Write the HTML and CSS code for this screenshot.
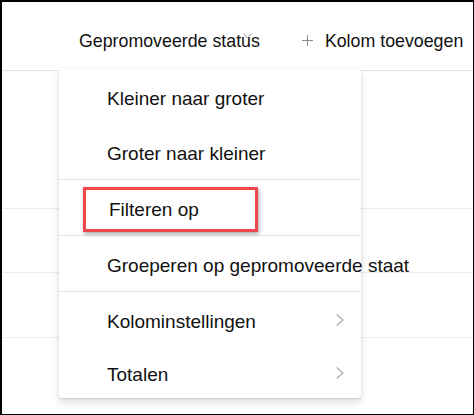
FILE: index.html
```html
<!DOCTYPE html>
<html lang="nl">
<head>
<meta charset="utf-8">
<title>Kolommenu</title>
<link rel="stylesheet" href="styles.css">
</head>
<body>
<div class="frame">
  <div class="header">
    <div class="col col-status">
      <span>Gepromoveerde status</span>
      <svg class="sort-chevron" width="9" height="6" viewBox="0 0 9 6"><polyline points="0.5,0.5 4.5,5 8.5,0.5" fill="none" stroke="#9a9a9a" stroke-width="1"/></svg>
    </div>
    <div class="col col-add">
      <svg class="plus" width="11" height="11" viewBox="0 0 11 11"><path d="M5.5 0v11M0 5.5h11" stroke="#8c8c8c" stroke-width="1" fill="none"/></svg>
      <span>Kolom toevoegen</span>
    </div>
  </div>
  <div class="row row-tall"></div>
  <div class="row"></div>
  <div class="row"></div>

  <div class="menu">
    <div class="section">
      <div class="item"><span class="label">Kleiner naar groter</span></div>
      <div class="item"><span class="label">Groter naar kleiner</span></div>
    </div>
    <div class="section">
      <div class="item item-highlight"><span class="label">Filteren op</span><span class="callout"></span></div>
    </div>
    <div class="section">
      <div class="item"><span class="label">Groeperen op gepromoveerde staat</span></div>
    </div>
    <div class="section">
      <div class="item"><span class="label">Kolominstellingen</span>
        <svg class="chev" width="8" height="12" viewBox="0 0 8 12"><polyline points="0.7,0.5 7,6 0.7,11.5" fill="none" stroke="#a6a6a6" stroke-width="1.1"/></svg>
      </div>
      <div class="item"><span class="label">Totalen</span>
        <svg class="chev" width="8" height="12" viewBox="0 0 8 12"><polyline points="0.7,0.5 7,6 0.7,11.5" fill="none" stroke="#a6a6a6" stroke-width="1.1"/></svg>
      </div>
    </div>
  </div>
</div>
</body>
</html>
```

FILE: styles.css
```css
* { box-sizing: border-box; }

html, body {
  margin: 0;
  padding: 0;
  background: #fff;
}

body {
  font-family: "Liberation Sans", Arial, sans-serif;
  color: #111;
}

.frame {
  position: relative;
  width: 474px;
  height: 415px;
  border: 2px solid #000;
  border-right-width: 1px;
  border-bottom-width: 1px;
  overflow: hidden;
  background: #fff;
}

.header {
  display: flex;
  align-items: flex-start;
  height: 69px;
  padding: 29px 0 0 77px;
  border-bottom: 1px solid #e3e3e3;
  font-size: 17.8px;
  line-height: 20px;
  white-space: nowrap;
}

.col-status {
  position: relative;
}

.sort-chevron {
  position: absolute;
  left: 164px;
  top: 2px;
}

.col-add {
  display: flex;
  align-items: center;
  gap: 12px;
  margin-left: 42px;
}

.plus {
  margin-top: -2px;
}

.row {
  height: 65px;
  border-bottom: 1px solid #ececec;
}

.row.row-tall {
  height: 138px;
}

.row:nth-child(3) {
  height: 64px;
}

.menu {
  position: absolute;
  left: 57px;
  top: 67px;
  width: 302px;
  background: #fff;
  border-radius: 3px;
  box-shadow: 0 4px 9px rgba(0, 0, 0, 0.14), 0 1px 2px rgba(0, 0, 0, 0.10);
  font-size: 19px;
  color: #111;
}

.section + .section {
  border-top: 1px solid #e4e4e4;
}

.item {
  position: relative;
  display: flex;
  align-items: center;
  justify-content: space-between;
  height: 55px;
  padding: 0 17px 0 48px;
  white-space: nowrap;
}

.section:last-child .item:last-child {
  height: 51px;
}

.label {
  padding-top: 5px;
  line-height: 22px;
}

.item-highlight .label {
  margin-left: 2px;
}

.callout {
  position: absolute;
  left: 24px;
  top: 7px;
  width: 175px;
  height: 45px;
  border: 3px solid #f0464d;
  box-shadow: 1px 2px 4px rgba(0, 0, 0, 0.35);
}
```
